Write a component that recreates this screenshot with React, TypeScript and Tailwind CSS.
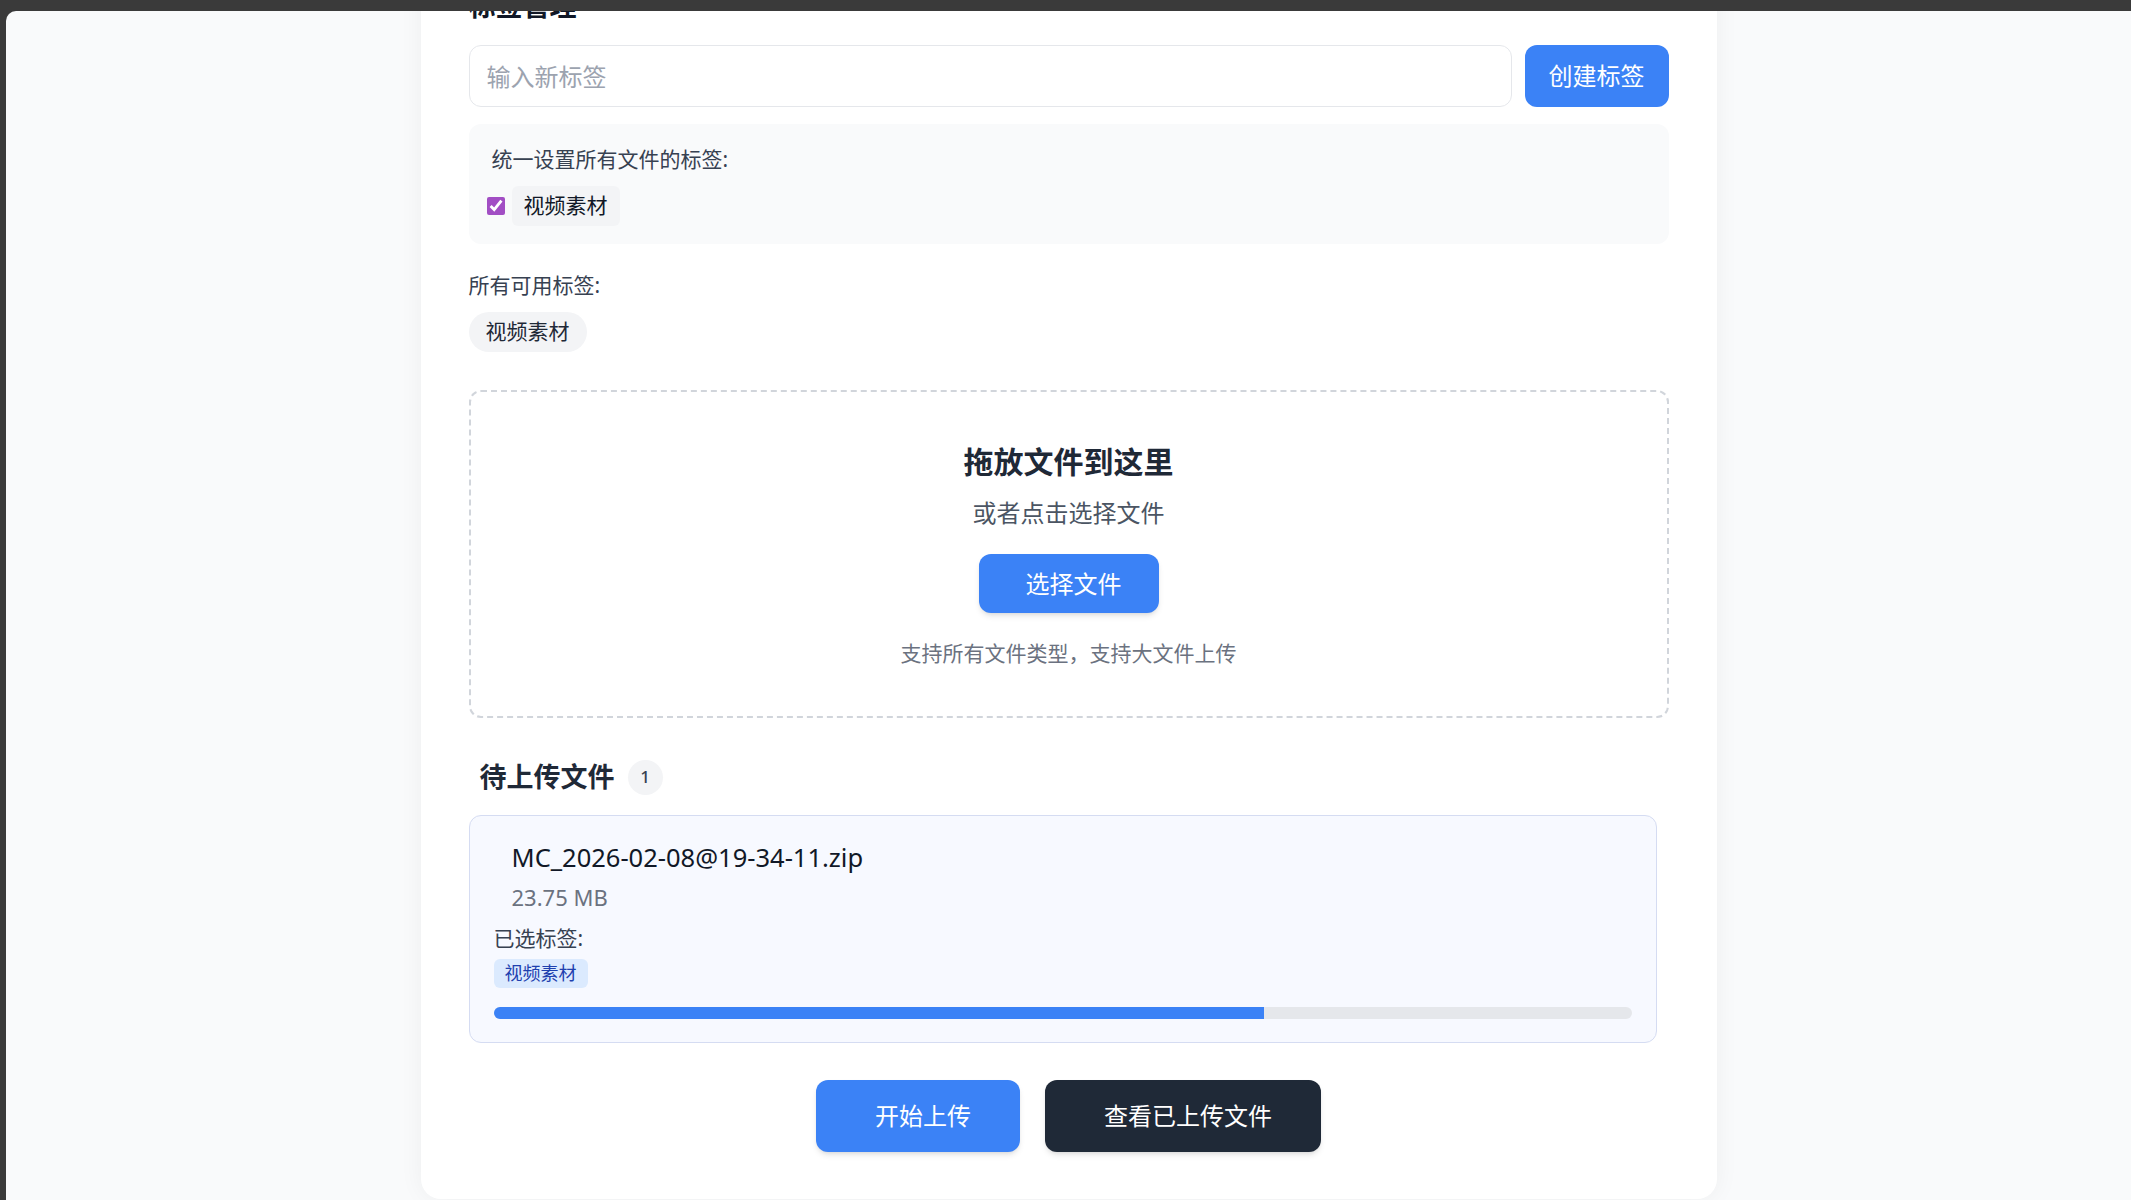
import { useState } from 'react';

type PendingFile = {
    name: string;
    size: string;
    tags: string[];
    progress: number;
};

const files: PendingFile[] = [
    { name: 'MC_2026-02-08@19-34-11.zip', size: '23.75 MB', tags: ['视频素材'], progress: 67.7 },
];

export default function App() {
    const [checked, setChecked] = useState(true);
    const [newTag, setNewTag] = useState('');

    return (
        <div className="h-screen w-full overflow-hidden bg-[#3a3a3a] pt-[11px] pl-[6px] flex flex-col [font-family:'Noto_Sans','Noto_Sans_CJK_SC',sans-serif]">
            <div className="flex-1 overflow-hidden rounded-tl-[10px] bg-[#f9fafb]">
                {/* main card, scrolled so its top sits above the window */}
                <div className="mx-auto mt-[-71px] w-[1296px] rounded-[20px] bg-white px-12 pt-12 pb-[47px] shadow-[0_0_24px_rgba(0,0,0,0.05)]">
                    <h2 className="text-[27px] font-bold leading-[36px] text-[#111827] mb-[21px]">标签管理</h2>

                    <div className="flex gap-[13px]">
                        <input
                            value={newTag}
                            onChange={(e) => setNewTag(e.target.value)}
                            placeholder="输入新标签"
                            className="h-[62px] flex-1 rounded-xl border border-[#e5e7eb] bg-white px-[17px] text-[24px] text-[#111827] outline-none placeholder:text-[#9ca3af]"
                        />
                        <button className="h-[62px] w-[144px] rounded-xl bg-[#3b82f6] text-[24px] text-white">创建标签</button>
                    </div>

                    {/* shared tags for all files */}
                    <div className="mt-[17px] rounded-xl bg-[#f9fafb] px-[18px] pt-[21px] pb-[18px]">
                        <p className="ml-[5px] text-[21px] leading-[28px] text-[#374151]">统一设置所有文件的标签:</p>
                        <div className="mt-[13px] flex items-center gap-[7px]">
                            <input
                                type="checkbox"
                                checked={checked}
                                onChange={() => setChecked(!checked)}
                                className="h-[18px] w-[18px] accent-[#a24ec4]"
                            />
                            <span className="flex h-[40px] items-center rounded-md bg-[#f3f4f6] px-3 text-[21px] text-[#111827]">视频素材</span>
                        </div>
                    </div>

                    <p className="mt-[27px] text-[21px] leading-[28px] text-[#374151]">所有可用标签:</p>
                    <div className="mt-[13px] flex">
                        <span className="flex h-[40px] items-center rounded-full bg-[#f3f4f6] px-[17px] text-[21px] text-[#1f2937]">视频素材</span>
                    </div>

                    {/* drop zone */}
                    <div className="mt-[38px] flex h-[328px] flex-col items-center rounded-xl border-2 border-dashed border-[#d1d5db] bg-white pt-[50px]">
                        <h3 className="text-[30px] font-bold leading-[40px] text-[#1f2937]">拖放文件到这里</h3>
                        <p className="mt-[15px] text-[24px] leading-[32px] text-[#4b5563]">或者点击选择文件</p>
                        <button className="mt-[25px] h-[59px] rounded-xl bg-[#3b82f6] pl-[47px] pr-[37px] text-[24px] text-white shadow-md">选择文件</button>
                        <p className="mt-[26px] text-[21px] leading-[28px] text-[#6b7280]">支持所有文件类型，支持大文件上传</p>
                    </div>

                    {/* pending list */}
                    <div className="mt-[41px] flex items-center gap-[13px] pl-[11px]">
                        <h3 className="text-[27px] font-bold leading-[36px] text-[#1f2937]">待上传文件</h3>
                        <span className="flex h-[35px] w-[35px] items-center justify-center rounded-full bg-[#f3f4f6] text-[17px] font-medium text-[#374151]">{files.length}</span>
                    </div>

                    <div className="mt-[20px] mr-[12px] flex flex-col gap-4">
                        {files.map((f) => (
                            <div key={f.name} className="rounded-xl border border-[#d5dcf2] bg-[#f7f9ff] px-6 pt-6 pb-[23px]">
                                <div className="pl-[18px]">
                                    <p className="text-[25.5px] leading-[34px] text-[#111827]">{f.name}</p>
                                    <p className="mt-[8px] text-[22px] leading-[30px] text-[#6b7280]">{f.size}</p>
                                </div>
                                <p className="mt-[12px] text-[21px] leading-[28px] text-[#374151]">已选标签:</p>
                                <div className="mt-[7px] flex gap-2">
                                    {f.tags.map((t) => (
                                        <span key={t} className="flex h-[29px] items-center rounded-md bg-[#dbeafe] px-[11px] text-[18px] text-[#1e40af]">{t}</span>
                                    ))}
                                </div>
                                <div className="mt-[19px] h-[12px] w-full overflow-hidden rounded-full bg-[#e5e7eb]">
                                    <div className="h-full bg-[#3b82f6]" style={{ width: `${f.progress}%` }} />
                                </div>
                            </div>
                        ))}
                    </div>

                    <div className="mt-[37px] flex justify-center gap-[25px]">
                        <button className="h-[72px] rounded-xl bg-[#3b82f6] pl-[59px] pr-[49px] text-[24px] text-white shadow-md">开始上传</button>
                        <button className="h-[72px] rounded-xl bg-[#1f2937] pl-[59px] pr-[49px] text-[24px] text-white shadow-md">查看已上传文件</button>
                    </div>
                </div>
            </div>
        </div>
    );
}
